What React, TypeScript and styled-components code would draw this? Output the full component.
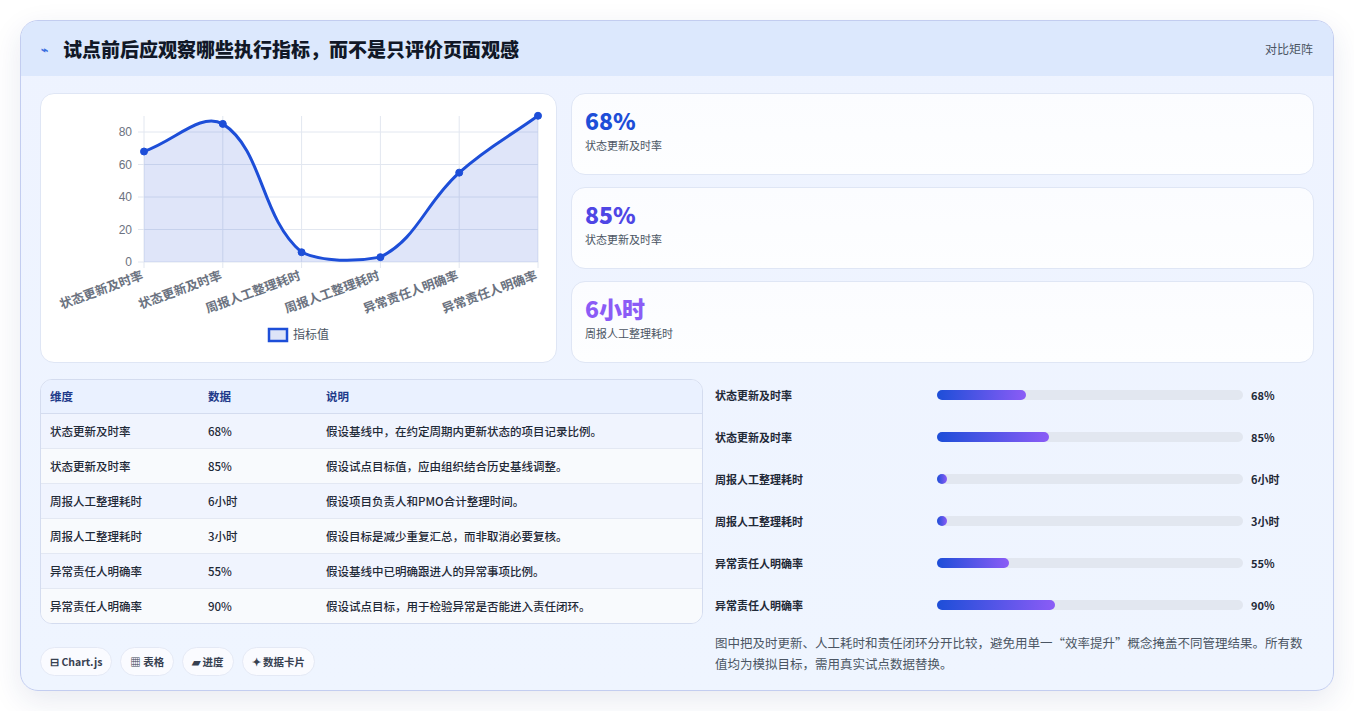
import React from 'react';
import styled, { createGlobalStyle } from 'styled-components';

const GlobalStyle = createGlobalStyle`
  html, body { margin: 0; padding: 0; background: #fff; }
  body { font-family: "Noto Sans CJK SC", "Noto Sans", sans-serif; }
  * { box-sizing: border-box; }
`;

const Page = styled.div`
  padding: 20px 20px 20px 20px;
`;

const Card = styled.div`
  width: 1314px;
  border: 1px solid #c3cdf0;
  border-radius: 18px;
  overflow: hidden;
  background: linear-gradient(180deg, #eef3ff 0%, #eff5ff 100%);
  box-shadow: 0 10px 30px rgba(30, 50, 120, 0.1);
`;

const Header = styled.div`
  height: 55px;
  background: #dce8fd;
  display: flex;
  align-items: center;
  justify-content: space-between;
  padding: 0 20px;
`;

const Title = styled.h1`
  margin: 0;
  font-size: 19px;
  font-weight: 800;
  color: #111827;
  display: flex;
  align-items: center;
  gap: 8px;
`;

const TitleIcon = styled.span`
  color: #3b6fe0;
  font-size: 12px;
  width: 14px;
`;

const Tag = styled.span`
  font-size: 12px;
  color: #4b5563;
`;

const Body = styled.div`
  padding: 17px 19px 14px 19px;
  display: flex;
  flex-direction: column;
  gap: 16px;
`;

const TopRow = styled.div`
  display: grid;
  grid-template-columns: 517px 1fr;
  gap: 14px;
`;

const Panel = styled.div`
  background: #fff;
  border: 1px solid #dfe6f5;
  border-radius: 14px;
`;

const ChartPanel = styled(Panel)`
  height: 270px;
  position: relative;
`;

const Stats = styled.div`
  display: flex;
  flex-direction: column;
  gap: 12px;
`;

const StatCard = styled(Panel)`
  height: 82px;
  padding: 10px 13px;
  background: linear-gradient(180deg, #fbfcff, #fdfeff);
`;

const StatValue = styled.div<{ $c: string }>`
  font-size: 23px;
  font-weight: 800;
  color: ${(p) => p.$c};
  line-height: 32px;
`;

const StatLabel = styled.div`
  font-size: 11px;
  color: #4b5563;
  margin-top: 1px;
`;

const BottomRow = styled.div`
  display: grid;
  grid-template-columns: 663px 1fr;
  gap: 12px;
`;

const LeftCol = styled.div`
  display: flex;
  flex-direction: column;
  gap: 23px;
`;

const TableWrap = styled.div`
  border: 1px solid #d4dcef;
  border-radius: 12px;
  overflow: hidden;
  background: #f7f9fd;
`;

const Table = styled.table`
  width: 100%;
  border-collapse: collapse;
  font-size: 11.5px;
  color: #1f2937;
  th, td { text-align: left; padding: 0 9px; font-weight: 500; }
  th { height: 33px; color: #1e3a8a; background: #eaf1ff; border-bottom: 1px solid #d4dcef; font-weight: 600; }
  td { height: 35px; border-bottom: 1px solid #e3e8f3; }
  tr:last-child td { border-bottom: none; }
  tbody tr:nth-child(odd) td { background: #f0f4fe; }
  tbody tr:nth-child(even) td { background: #f8fafd; }
`;

const Chips = styled.div`
  display: flex;
  gap: 8px;
`;

const Chip = styled.span`
  height: 29px;
  padding: 0 9px;
  border-radius: 15px;
  background: #fafbff;
  border: 1px solid #e4e9f5;
  font-size: 10.5px;
  font-weight: 600;
  color: #374151;
  display: flex;
  align-items: center;
  gap: 3px;
`;

const Bars = styled.div`
  display: flex;
  flex-direction: column;
  margin-top: -5px;
`;

const BarRow = styled.div`
  display: grid;
  grid-template-columns: 214px 306px 1fr;
  align-items: center;
  gap: 8px;
  height: 42px;
  font-size: 11px;
  font-weight: 600;
  color: #1f2937;
`;

const Track = styled.div`
  height: 10px;
  border-radius: 5px;
  background: #e2e7f0;
`;

const Fill = styled.div`
  height: 100%;
  border-radius: 5px;
  background: linear-gradient(90deg, #1d4ed8, #8b5cf6);
`;

const Note = styled.p`
  margin: 6px 0 0;
  padding-right: 2px;
  font-size: 12.5px;
  line-height: 21px;
  color: #4b5563;
`;

const rows = [
  ['状态更新及时率', '68%', '假设基线中，在约定周期内更新状态的项目记录比例。', 68],
  ['状态更新及时率', '85%', '假设试点目标值，应由组织结合历史基线调整。', 85],
  ['周报人工整理耗时', '6小时', '假设项目负责人和PMO合计整理时间。', 6],
  ['周报人工整理耗时', '3小时', '假设目标是减少重复汇总，而非取消必要复核。', 3],
  ['异常责任人明确率', '55%', '假设基线中已明确跟进人的异常事项比例。', 55],
  ['异常责任人明确率', '90%', '假设试点目标，用于检验异常是否能进入责任闭环。', 90],
] as const;

// chart geometry (panel-local coordinates)
const X0 = 103, X1 = 497, YBASE = 168, PX = 1.625;
const vals = [68, 85, 6, 3, 55, 90];
const pts = vals.map((v, i) => ({ x: X0 + (i * (X1 - X0)) / 5, y: YBASE - v * PX }));

function curvePath() {
  const t = 0.4;
  const cps = pts.map((p, i) => {
    const prev = pts[i - 1] || p;
    const next = pts[i + 1] || p;
    const d01 = Math.hypot(p.x - prev.x, p.y - prev.y);
    const d12 = Math.hypot(next.x - p.x, next.y - p.y);
    const s01 = d01 / (d01 + d12 || 1);
    const s12 = d12 / (d01 + d12 || 1);
    const fa = t * s01, fb = t * s12;
    return {
      px: p.x - fa * (next.x - prev.x), py: p.y - fa * (next.y - prev.y),
      nx: p.x + fb * (next.x - prev.x), ny: p.y + fb * (next.y - prev.y),
    };
  });
  let d = `M${pts[0].x},${pts[0].y}`;
  for (let i = 1; i < pts.length; i++) {
    const a = cps[i - 1], b = cps[i];
    const top = 18;
    d += ` C${a.nx},${Math.max(top, Math.min(a.ny, YBASE))} ${b.px},${Math.max(top, Math.min(b.py, YBASE))} ${pts[i].x},${pts[i].y}`;
  }
  return d;
}

const labels = ['状态更新及时率', '状态更新及时率', '周报人工整理耗时', '周报人工整理耗时', '异常责任人明确率', '异常责任人明确率'];

function LineChart() {
  const line = curvePath();
  return (
    <svg width="517" height="270" style={{ display: 'block' }}>
      {[0, 20, 40, 60, 80].map((v) => (
        <g key={v}>
          <line x1={X0 - 6} x2={X1} y1={YBASE - v * PX} y2={YBASE - v * PX} stroke="#e2e7f0" />
          <text x={X0 - 12} y={YBASE - v * PX + 4} fontSize="12" fill="#6b7280" textAnchor="end" fontFamily="Liberation Sans, sans-serif">{v}</text>
        </g>
      ))}
      {pts.map((p, i) => (
        <line key={i} x1={p.x} x2={p.x} y1={22} y2={YBASE + 6} stroke="#e2e7f0" />
      ))}
      <path d={`${line} L${X1},${YBASE} L${X0},${YBASE} Z`} fill="rgba(59,91,219,0.16)" />
      <path d={line} fill="none" stroke="#1d4ed8" strokeWidth="3" />
      {pts.map((p, i) => (
        <circle key={i} cx={p.x} cy={p.y} r="3.5" fill="#1d4ed8" stroke="#1d4ed8" />
      ))}
      {pts.map((p, i) => (
        <text key={i} x={p.x} y={YBASE + 17} fontSize="12.5" fontWeight="600" fill="#6b7280" textAnchor="end"
          transform={`rotate(-20 ${p.x} ${YBASE + 17})`}>{labels[i]}</text>
      ))}
      <rect x="228" y="235" width="18" height="12" fill="#dde4f8" stroke="#1d4ed8" strokeWidth="2.5" />
      <text x="252" y="245" fontSize="12" fill="#4b5563">指标值</text>
    </svg>
  );
}

export default function App() {
  return (
    <Page>
      <GlobalStyle />
      <Card>
        <Header>
          <Title><TitleIcon>⌁</TitleIcon>试点前后应观察哪些执行指标，而不是只评价页面观感</Title>
          <Tag>对比矩阵</Tag>
        </Header>
        <Body>
          <TopRow>
            <ChartPanel><LineChart /></ChartPanel>
            <Stats>
              <StatCard><StatValue $c="#1d4ed8">68%</StatValue><StatLabel>状态更新及时率</StatLabel></StatCard>
              <StatCard><StatValue $c="#4f46e5">85%</StatValue><StatLabel>状态更新及时率</StatLabel></StatCard>
              <StatCard><StatValue $c="#8b5cf6">6小时</StatValue><StatLabel>周报人工整理耗时</StatLabel></StatCard>
            </Stats>
          </TopRow>
          <BottomRow>
            <LeftCol>
              <TableWrap>
                <Table>
                  <thead>
                    <tr><th style={{ width: 158 }}>维度</th><th style={{ width: 118 }}>数据</th><th>说明</th></tr>
                  </thead>
                  <tbody>
                    {rows.map((r, i) => (
                      <tr key={i}><td>{r[0]}</td><td>{r[1]}</td><td>{r[2]}</td></tr>
                    ))}
                  </tbody>
                </Table>
              </TableWrap>
              <Chips>
                <Chip>⊟ Chart.js</Chip>
                <Chip>▦ 表格</Chip>
                <Chip>▰ 进度</Chip>
                <Chip>✦ 数据卡片</Chip>
              </Chips>
            </LeftCol>
            <div>
              <Bars>
                {rows.map((r, i) => (
                  <BarRow key={i}>
                    <span>{r[0]}</span>
                    <Track><Fill style={{ width: Math.max(10, r[3] * 0.43 * 3.06) }} /></Track>
                    <span>{r[1]}</span>
                  </BarRow>
                ))}
              </Bars>
              <Note>图中把及时更新、人工耗时和责任闭环分开比较，避免用单一“效率提升”概念掩盖不同管理结果。所有数值均为模拟目标，需用真实试点数据替换。</Note>
            </div>
          </BottomRow>
        </Body>
      </Card>
    </Page>
  );
}
